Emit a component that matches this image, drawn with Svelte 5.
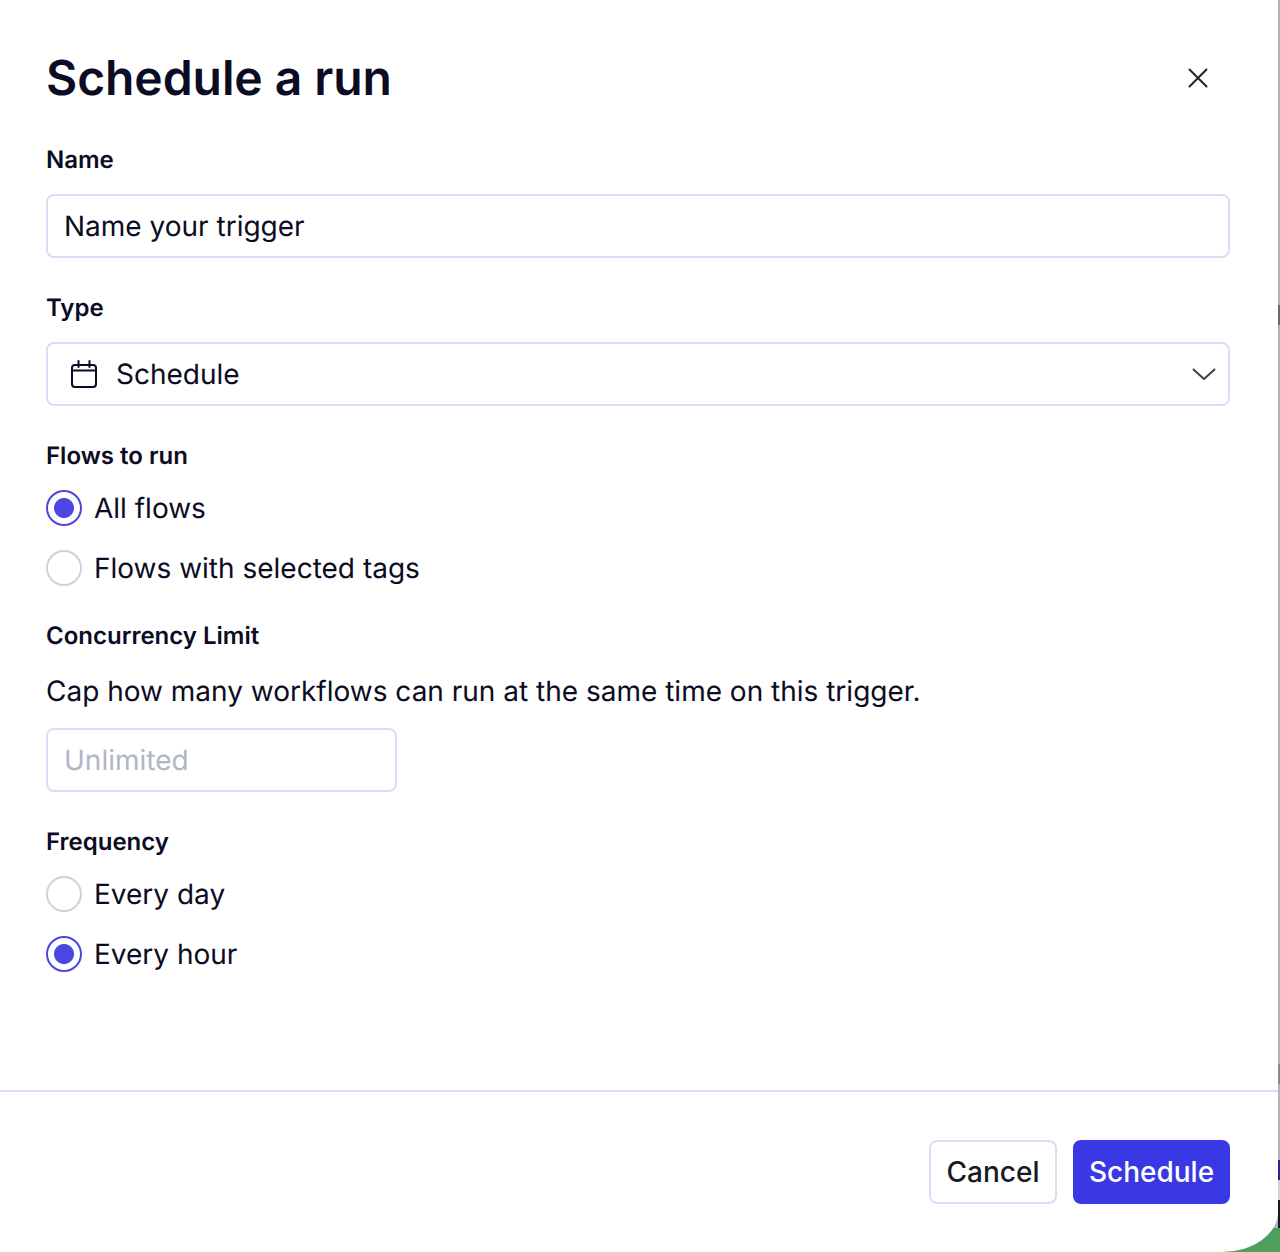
<script lang="ts">
  let name = "Name your trigger";
</script>

<div class="backdrop">
  <div class="strip-marks">
    <span class="mark one"></span>
    <span class="mark two"></span>
    <span class="mark three"></span>
    <span class="mark four"></span>
    <span class="mark five"></span>
  </div>
  <span class="green"></span>

  <div class="modal">
    <div class="body">
      <header class="head">
        <h1>Schedule a run</h1>
        <button class="close" aria-label="Close">
          <svg width="24" height="24" viewBox="0 0 24 24" fill="none" stroke="#1f2433" stroke-width="2" stroke-linecap="round">
            <path d="M3.5 3.5l17 17M20.5 3.5l-17 17" />
          </svg>
        </button>
      </header>

      <div class="field first">
        <div class="label">Name</div>
        <div class="input">{name}</div>
      </div>

      <div class="field">
        <div class="label">Type</div>
        <div class="input select">
          <svg class="cal" width="28" height="28" viewBox="0 0 28 28" fill="none" stroke="#0b0c24" stroke-width="2" stroke-linecap="round" stroke-linejoin="round">
            <rect x="2" y="5" width="24" height="22" rx="3" />
            <path d="M8.5 1v6M19.5 1v6M2 10.5h24" />
          </svg>
          <span class="select-text">Schedule</span>
          <svg class="chev" width="24" height="24" viewBox="0 0 24 24" fill="none" stroke="#3a3f4c" stroke-width="2" stroke-linecap="round" stroke-linejoin="round">
            <path d="M1.5 7.5L12 17L22.5 7.5" />
          </svg>
        </div>
      </div>

      <div class="field">
        <div class="label">Flows to run</div>
        <div class="radios">
          <div class="radio-row"><span class="radio on"></span>All flows</div>
          <div class="radio-row"><span class="radio"></span>Flows with selected tags</div>
        </div>
      </div>

      <div class="field limit">
        <div class="label">Concurrency Limit</div>
        <p class="help">Cap how many workflows can run at the same time on this trigger.</p>
        <div class="input small">Unlimited</div>
      </div>

      <div class="field">
        <div class="label">Frequency</div>
        <div class="radios">
          <div class="radio-row"><span class="radio"></span>Every day</div>
          <div class="radio-row"><span class="radio on"></span>Every hour</div>
        </div>
      </div>
    </div>

    <footer class="foot">
      <button class="btn cancel">Cancel</button>
      <button class="btn primary">Schedule</button>
    </footer>
  </div>
</div>

<style>
  :global(body) {
    margin: 0;
    background: #fff;
  }

  .backdrop {
    position: relative;
    width: 1280px;
    height: 1252px;
    overflow: hidden;
    background: #b4b4b4;
    font-family: Inter, "Liberation Sans", sans-serif;
    color: #0b0c24;
    text-rendering: geometricPrecision;
  }

  .mark {
    position: absolute;
    right: 0;
    width: 2px;
  }
  .mark.one { top: 305px; height: 20px; background: #6a6a6a; }
  .mark.two { top: 1160px; height: 20px; background: #2a2a8a; }
  .mark.three { top: 1180px; height: 20px; background: #d0d0d0; }
  .mark.four { top: 1200px; height: 40px; background: #161a26; }
  .mark.five { top: 1064px; height: 20px; background: #8a8a8a; }

  .green {
    position: absolute;
    right: 0;
    bottom: 0;
    width: 70px;
    height: 24px;
    background: #4f9f5c;
  }

  .modal {
    position: relative;
    width: 1278px;
    height: 1252px;
    display: flex;
    flex-direction: column;
    box-sizing: border-box;
    background: #fff;
    border-bottom-right-radius: 56px 40px;
  }

  .body {
    flex: 1;
    padding: 47px 48px 0 46px;
  }

  .head {
    display: flex;
    justify-content: space-between;
    align-items: center;
    height: 62px;
  }

  h1 {
    margin: 0;
    font-size: 48px;
    line-height: 62px;
    font-weight: 600;
    letter-spacing: -0.07px;
  }

  .close {
    width: 24px;
    height: 24px;
    padding: 0;
    margin-right: 20px;
    background: none;
    border: none;
    display: flex;
  }

  .field {
    margin-top: 34px;
  }
  .field.first {
    margin-top: 35px;
  }
  .field.limit {
    margin-top: 22px;
  }

  .label {
    font-size: 24px;
    line-height: 32px;
    font-weight: 600;
    height: 32px;
  }

  .input {
    box-sizing: border-box;
    height: 64px;
    margin-top: 18px;
    border: 2px solid #d8dff4;
    border-radius: 8px;
    padding: 0 16px;
    display: flex;
    align-items: center;
    font-size: 28px;
  }

  .select {
    padding: 0 12px 0 22px;
  }

  .cal {
    flex: none;
  }

  .select-text {
    flex: 1;
    margin-left: 18px;
  }

  .chev {
    flex: none;
  }

  .radios {
    margin-top: 6px;
  }

  .radio-row {
    height: 60px;
    display: flex;
    align-items: center;
    gap: 12px;
    font-size: 28px;
  }

  .radio {
    box-sizing: border-box;
    width: 36px;
    height: 36px;
    border: 2px solid #ced2df;
    border-radius: 50%;
    background: #fff;
  }

  .radio.on {
    border-color: #4a46e3;
    background: radial-gradient(circle, #4a46e3 0 9.5px, #fff 10.5px);
  }

  .help {
    margin: 19px 0 0;
    font-size: 28px;
    line-height: 40px;
  }

  .input.small {
    width: 351px;
    margin-top: 17px;
    color: #b1b5c9;
  }

  .foot {
    flex: none;
    box-sizing: border-box;
    height: 162px;
    border-top: 2px solid #d8dff4;
    display: flex;
    justify-content: flex-end;
    gap: 16px;
    padding: 48px 48px 0 0;
  }

  .btn {
    box-sizing: border-box;
    height: 64px;
    border-radius: 8px;
    font-family: inherit;
    font-size: 28px;
    font-weight: 500;
    padding: 0;
  }

  .cancel {
    width: 128px;
    background: #fff;
    border: 2px solid #d8dff4;
    color: #171a26;
  }

  .primary {
    width: 157px;
    background: #3a38e4;
    border: none;
    color: #fff;
  }
</style>
